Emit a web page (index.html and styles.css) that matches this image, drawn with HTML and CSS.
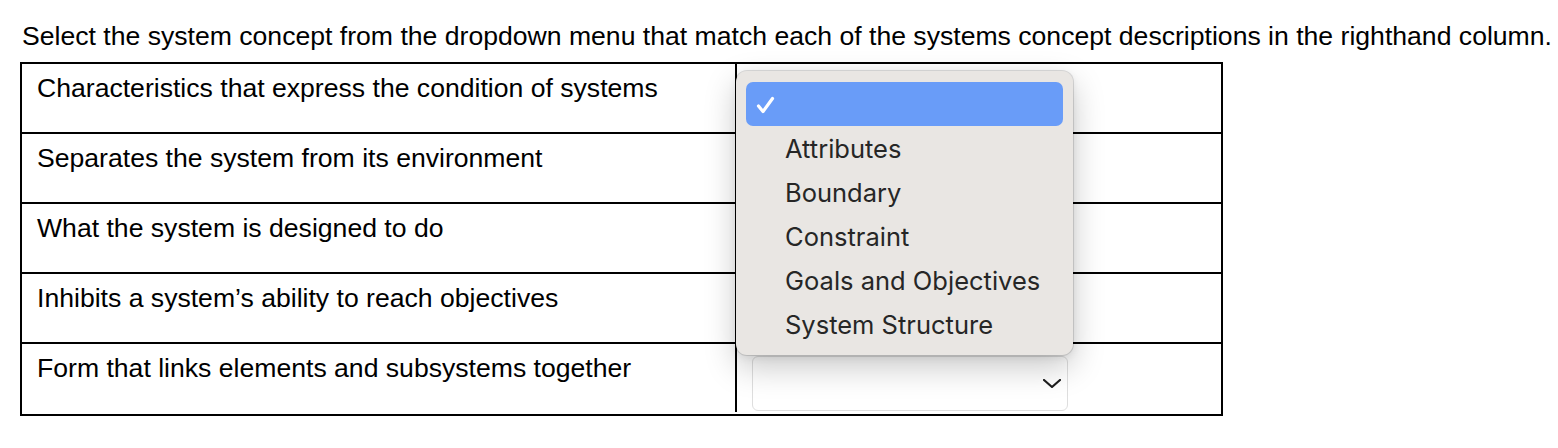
FILE: index.html
```html
<!DOCTYPE html>
<html lang="en">
<head>
<meta charset="utf-8">
<title>System concepts</title>
<link rel="stylesheet" href="styles.css">
</head>
<body>
<p class="prompt">Select the system concept from the dropdown menu that match each of the systems concept descriptions in the righthand column.</p>
<div class="wrap">
  <div class="match">
    <div class="cell desc">Characteristics that express the condition of systems</div>
    <div class="cell answer"><div class="select"><svg class="chev" width="18" height="9" viewBox="0 0 18 9"><path d="M1 1 L9 8 L17 1" fill="none" stroke="#1e1e1e" stroke-width="2" stroke-linecap="round" stroke-linejoin="round"/></svg></div></div>
    <div class="cell desc">Separates the system from its environment</div>
    <div class="cell answer"><div class="select"><svg class="chev" width="18" height="9" viewBox="0 0 18 9"><path d="M1 1 L9 8 L17 1" fill="none" stroke="#1e1e1e" stroke-width="2" stroke-linecap="round" stroke-linejoin="round"/></svg></div></div>
    <div class="cell desc">What the system is designed to do</div>
    <div class="cell answer"><div class="select"><svg class="chev" width="18" height="9" viewBox="0 0 18 9"><path d="M1 1 L9 8 L17 1" fill="none" stroke="#1e1e1e" stroke-width="2" stroke-linecap="round" stroke-linejoin="round"/></svg></div></div>
    <div class="cell desc">Inhibits a system’s ability to reach objectives</div>
    <div class="cell answer"><div class="select"><svg class="chev" width="18" height="9" viewBox="0 0 18 9"><path d="M1 1 L9 8 L17 1" fill="none" stroke="#1e1e1e" stroke-width="2" stroke-linecap="round" stroke-linejoin="round"/></svg></div></div>
    <div class="cell desc last">Form that links elements and subsystems together</div>
    <div class="cell answer last"><div class="select"><svg class="chev" width="18" height="9" viewBox="0 0 18 9"><path d="M1 1 L9 8 L17 1" fill="none" stroke="#1e1e1e" stroke-width="2.2" stroke-linecap="round" stroke-linejoin="round"/></svg></div></div>
  </div>
  <div class="menu">
    <div class="item selected"><svg class="check" width="19" height="18" viewBox="0 0 19 18"><path d="M2.5 10 L7 15.5 L16.5 2.5" fill="none" stroke="#ffffff" stroke-width="3.2" stroke-linecap="round" stroke-linejoin="round"/></svg></div>
    <div class="item">Attributes</div>
    <div class="item">Boundary</div>
    <div class="item">Constraint</div>
    <div class="item">Goals and Objectives</div>
    <div class="item">System Structure</div>
  </div>
</div>
</body>
</html>
```
FILE: styles.css
```css
html, body {
  margin: 0;
  padding: 0;
  background: #ffffff;
}
body {
  font-family: "Liberation Sans", Arial, Helvetica, sans-serif;
  color: #000;
  padding: 21px 0 0 20px;
}
.prompt {
  margin: 0 0 11px 2px;
  font-size: 26.6px;
  line-height: 30px;
  white-space: nowrap;
}
.wrap {
  position: relative;
  width: 1203px;
}
.match {
  display: grid;
  grid-template-columns: 715px 484px;
  grid-auto-rows: 70px;
  border: 2px solid #000;
}
.match .last {
  height: 68px;
}
.cell {
  box-sizing: border-box;
  border-bottom: 2px solid #000;
  font-size: 26.6px;
  line-height: 30px;
}
.cell.last {
  border-bottom: none;
}
.desc {
  border-right: 2px solid #000;
  padding: 9px 15px 0 15px;
}
.answer {
  padding: 12px 0 0 15px;
}
.select {
  box-sizing: border-box;
  width: 316px;
  height: 55px;
  border: 1px solid #dedede;
  border-radius: 6px;
  background: #ffffff;
  display: flex;
  align-items: center;
  justify-content: flex-end;
  padding-right: 6px;
}
.chev {
  display: block;
}
.menu {
  position: absolute;
  left: 716px;
  top: 9px;
  width: 337px;
  height: 284px;
  box-sizing: border-box;
  padding: 11px 10px 9px 10px;
  background: #e9e6e3;
  border-radius: 11px;
  box-shadow: 0 0 0 1px rgba(0, 0, 0, 0.12), 0 12px 32px rgba(0, 0, 0, 0.22), 0 2px 8px rgba(0, 0, 0, 0.08);
  font-family: Inter, "Noto Sans", sans-serif;
  font-size: 25.5px;
  color: #262626;
}
.item {
  height: 44px;
  display: flex;
  align-items: center;
  padding-left: 39px;
  border-radius: 7px;
}
.item.selected {
  background: #699cf8;
  padding-left: 10px;
}
.check {
  display: block;
  margin-top: 2px;
}
```
